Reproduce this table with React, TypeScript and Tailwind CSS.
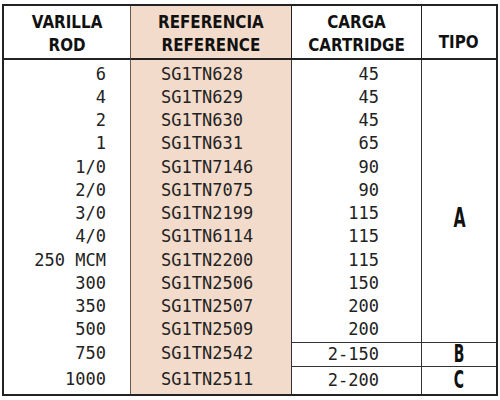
import React from 'react';

type Row = { rod: string; ref: string; carga: string };

const ROWS: Row[] = [
  { rod: '6', ref: 'SG1TN628', carga: '45' },
  { rod: '4', ref: 'SG1TN629', carga: '45' },
  { rod: '2', ref: 'SG1TN630', carga: '45' },
  { rod: '1', ref: 'SG1TN631', carga: '65' },
  { rod: '1/0', ref: 'SG1TN7146', carga: '90' },
  { rod: '2/0', ref: 'SG1TN7075', carga: '90' },
  { rod: '3/0', ref: 'SG1TN2199', carga: '115' },
  { rod: '4/0', ref: 'SG1TN6114', carga: '115' },
  { rod: '250 MCM', ref: 'SG1TN2200', carga: '115' },
  { rod: '300', ref: 'SG1TN2506', carga: '150' },
  { rod: '350', ref: 'SG1TN2507', carga: '200' },
  { rod: '500', ref: 'SG1TN2509', carga: '200' },
  { rod: '750', ref: 'SG1TN2542', carga: '2-150' },
  { rod: '1000', ref: 'SG1TN2511', carga: '2-200' },
];

const head = "font-['DejaVu_Sans',sans-serif] font-bold text-[18px] leading-[23px] text-[#111]";
const body = "font-['DejaVu_Sans_Mono',monospace] text-[17px] text-[#222] whitespace-nowrap";
const tipo = "inline-block scale-x-[0.58] font-['DejaVu_Sans',sans-serif] font-bold leading-[18px] text-[#111]";

export default function App() {
  return (
    <div className="h-[400px] w-[500px] bg-white pl-[2px] pt-[4px]">
      <div className="grid w-[496px] grid-cols-[126px_161px_130px_75px] grid-rows-[54px_26px_repeat(11,23.25px)_24px_28px] border-2 border-[#222]">
        {/* header */}
        <div className={`${head} border-b-2 border-[#222] pt-[4px] text-center`}>
          <span className="inline-block scale-x-[0.84]">VARILLA<br />ROD</span>
        </div>
        <div className={`${head} border-b-2 border-l border-[#222] border-l-[#6a5a50] bg-[#f2dbca] pt-[4px] text-center`}>
          <span className="inline-block scale-x-[0.84]">REFERENCIA<br />REFERENCE</span>
        </div>
        <div className={`${head} border-b-2 border-l border-[#222] pt-[4px] text-center`}>
          <span className="inline-block scale-x-[0.84]">CARGA<br />CARTRIDGE</span>
        </div>
        <div className={`${head} border-b-2 border-l border-[#222] pt-[24px] text-center`}>
          <span className="inline-block scale-x-[0.84]">TIPO</span>
        </div>

        {ROWS.map((r, i) => {
          const first = i === 0;
          const split = i >= 12;
          return (
            <React.Fragment key={r.ref}>
              <div className={`${body} flex items-center justify-end pr-[24px] ${first ? 'pt-[3px]' : ''}`}>
                {r.rod}
              </div>
              <div className={`${body} flex items-center border-l border-[#6a5a50] bg-[#f2dbca] pl-[30px] ${first ? 'pt-[3px]' : ''}`}>
                {r.ref}
              </div>
              <div
                className={`${body} flex items-center justify-end border-l border-[#333] pr-[42px] ${first ? 'pt-[3px]' : ''} ${split ? 'border-t' : ''}`}
              >
                {r.carga}
              </div>
              {first && (
                <div className="row-span-12 flex items-center justify-center border-l border-[#333] pt-[34px]">
                  <span className={`${tipo} text-[27px]`}>A</span>
                </div>
              )}
              {split && (
                <div className="flex items-center justify-center border-l border-t border-[#333]">
                  <span className={`${tipo} text-[24px]`}>{i === 12 ? 'B' : 'C'}</span>
                </div>
              )}
            </React.Fragment>
          );
        })}
      </div>
    </div>
  );
}
